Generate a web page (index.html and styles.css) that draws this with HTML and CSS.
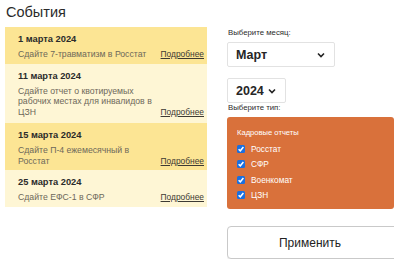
FILE: index.html
```html
<!DOCTYPE html>
<html lang="ru">
<head>
  <meta charset="UTF-8">
  <meta name="viewport" content="width=device-width, initial-scale=1.0">
  <title>События</title>
  <link rel="stylesheet" href="styles.css">
</head>
<body>
  <div class="page">
    <div class="events">
      <h1>События</h1>
      <div class="list">
        <div class="item dark">
          <div class="date">1 марта 2024</div>
          <div class="row">
            <div class="desc">Сдайте 7-травматизм в Росстат</div>
            <a href="#" class="more">Подробнее</a>
          </div>
        </div>
        <div class="item light tall">
          <div class="date">11 марта 2024</div>
          <div class="row">
            <div class="desc">Сдайте отчет о квотируемых рабочих местах для инвалидов в ЦЗН</div>
            <a href="#" class="more">Подробнее</a>
          </div>
        </div>
        <div class="item dark">
          <div class="date">15 марта 2024</div>
          <div class="row">
            <div class="desc">Сдайте П-4 ежемесячный в Росстат</div>
            <a href="#" class="more">Подробнее</a>
          </div>
        </div>
        <div class="item light">
          <div class="date">25 марта 2024</div>
          <div class="row">
            <div class="desc">Сдайте ЕФС-1 в СФР</div>
            <a href="#" class="more">Подробнее</a>
          </div>
        </div>
      </div>
    </div>

    <div class="filters">
      <div class="label">Выберите месяц:</div>
      <div class="select month">
        <span>Март</span>
        <svg width="8" height="6" viewBox="0 0 8 6"><path d="M1 1.5 L4 4.5 L7 1.5" fill="none" stroke="#222" stroke-width="1.6"/></svg>
      </div>
      <div class="select year">
        <span>2024</span>
        <svg width="8" height="6" viewBox="0 0 8 6"><path d="M1 1.5 L4 4.5 L7 1.5" fill="none" stroke="#222" stroke-width="1.6"/></svg>
      </div>
      <div class="label">Выберите тип:</div>
      <div class="types">
        <div class="types-title">Кадровые отчеты</div>
        <label class="check"><span class="box"><svg width="8" height="8" viewBox="0 0 8 8"><path d="M1.6 4.2 L3.3 5.8 L6.4 2" fill="none" stroke="#fff" stroke-width="1.5"/></svg></span>Росстат</label>
        <label class="check"><span class="box"><svg width="8" height="8" viewBox="0 0 8 8"><path d="M1.6 4.2 L3.3 5.8 L6.4 2" fill="none" stroke="#fff" stroke-width="1.5"/></svg></span>СФР</label>
        <label class="check"><span class="box"><svg width="8" height="8" viewBox="0 0 8 8"><path d="M1.6 4.2 L3.3 5.8 L6.4 2" fill="none" stroke="#fff" stroke-width="1.5"/></svg></span>Военкомат</label>
        <label class="check"><span class="box"><svg width="8" height="8" viewBox="0 0 8 8"><path d="M1.6 4.2 L3.3 5.8 L6.4 2" fill="none" stroke="#fff" stroke-width="1.5"/></svg></span>ЦЗН</label>
      </div>
      <button class="apply">Применить</button>
    </div>
  </div>
</body>
</html>
```

FILE: styles.css
```css
* {
  margin: 0;
  padding: 0;
  box-sizing: border-box;
  font-family: 'Liberation Sans', Arial, sans-serif;
}

body {
  background: #fff;
  color: #2b2b2b;
}

.page {
  display: flex;
  gap: 20px;
  padding-left: 5px;
}

.events {
  width: 202px;
}

h1 {
  font-size: 14.5px;
  font-weight: 400;
  line-height: 20px;
  padding: 2px 0 0 1px;
  margin-bottom: 5px;
  color: #2a2a2a;
}

.item {
  padding: 6px 3px 4px 13px;
}

.tall {
  padding-bottom: 6px;
}

.dark {
  background: #fce594;
}

.light {
  background: #fef6d5;
}

.date {
  font-size: 9.3px;
  font-weight: 700;
  line-height: 12px;
  margin-bottom: 4px;
  color: #2b2b2b;
}

.row {
  display: flex;
  justify-content: space-between;
  align-items: flex-end;
}

.desc {
  width: 138px;
  font-size: 8.7px;
  line-height: 10.5px;
  color: #6d685a;
}

.more {
  font-size: 8.4px;
  line-height: 10.5px;
  color: #3d3a33;
}

.filters {
  width: 167px;
  overflow: hidden;
  padding-top: 28px;
}

.label {
  font-size: 7.8px;
  line-height: 10px;
  color: #2b2b2b;
  padding-left: 1px;
}

.select {
  display: flex;
  align-items: center;
  justify-content: space-between;
  height: 25px;
  border: 1px solid #e2e2e2;
  border-radius: 2px;
  padding: 0 9px 0 8px;
  font-size: 12.5px;
  font-weight: 700;
  color: #262626;
}

.month {
  width: 108px;
  margin-top: 4px;
}

.year {
  width: 59px;
  margin-top: 11px;
}

.year + .label {
  line-height: 9px;
}

.types {
  margin-top: 5px;
  background: #d9713b;
  border-radius: 3px;
  height: 92px;
  padding: 11px 10px 0;
  color: #fff;
}

.types-title {
  font-size: 7.6px;
  line-height: 10px;
  margin-bottom: 3px;
}

.check {
  display: flex;
  align-items: center;
  height: 15.5px;
  font-size: 8.3px;
}

.box {
  display: flex;
  align-items: center;
  justify-content: center;
  width: 8px;
  height: 8px;
  border-radius: 1.5px;
  background: #1a6fe0;
  margin-right: 6px;
}

.apply {
  display: block;
  width: 172px;
  height: 33px;
  margin-top: 17px;
  border: 1px solid #c9c9c9;
  border-radius: 4px;
  background: #fff;
  font-size: 12px;
  color: #222;
  box-shadow: 0 1px 1px rgba(0, 0, 0, 0.08);
  padding-right: 6px;
}
```
